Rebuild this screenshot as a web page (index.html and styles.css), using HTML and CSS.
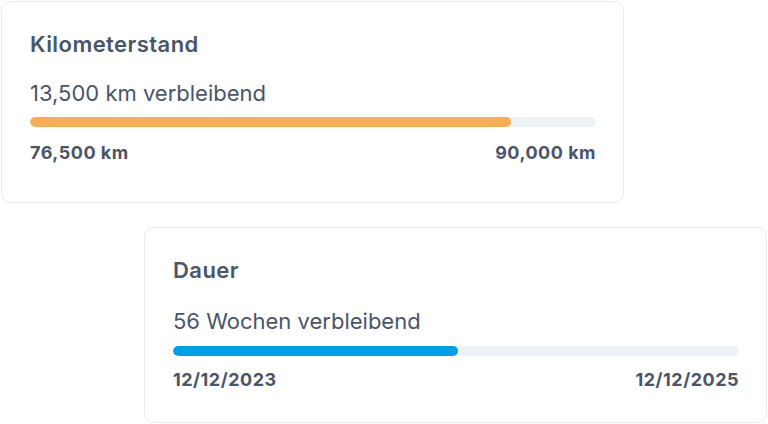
FILE: index.html
```html
<!DOCTYPE html>
<html lang="de">
<head>
<meta charset="utf-8">
<link rel="stylesheet" href="styles.css">
</head>
<body>
<div class="stack">
  <section class="card card-km">
    <h2 class="title">Kilometerstand</h2>
    <p class="remaining">13,500 km verbleibend</p>
    <div class="track"><div class="fill fill-orange" style="width:85%"></div></div>
    <div class="labels"><span>76,500 km</span><span>90,000 km</span></div>
  </section>
  <section class="card card-time">
    <h2 class="title">Dauer</h2>
    <p class="remaining">56 Wochen verbleibend</p>
    <div class="track"><div class="fill fill-blue" style="width:50.4%"></div></div>
    <div class="labels"><span>12/12/2023</span><span>12/12/2025</span></div>
  </section>
</div>
</body>
</html>
```
FILE: styles.css
```css
* { box-sizing: border-box; }
html, body { margin: 0; padding: 0; background: #fff; }
body {
  font-family: "Inter", "Open Sans", sans-serif;
  color: #4a5568;
  width: 768px;
  height: 424px;
  overflow: hidden;
}
.stack {
  display: flex;
  flex-direction: column;
  padding: 1px 0 0 1px;
}
.card {
  width: 623px;
  background: #fff;
  border: 1px solid #e8eaee;
  border-radius: 10px;
  padding: 28px 27px 0 28px;
}
.card-km { height: 202px; }
.card-time { height: 196px; margin-left: 143px; margin-top: 24px; }
.title {
  margin: 0;
  font-size: 22px;
  line-height: 28px;
  font-weight: 600;
  letter-spacing: 0.45px;
  color: #4a5568;
}
.remaining {
  margin: 21px 0 0;
  font-size: 22px;
  line-height: 28px;
  font-weight: 400;
  color: #4a5568;
}
.card-time .remaining { margin-top: 23px; }
.track {
  margin-top: 10px;
  height: 10px;
  border-radius: 5px;
  background: #edf2f7;
  overflow: hidden;
}
.card-time .track { margin-top: 11px; }
.fill { height: 100%; border-radius: 5px; }
.fill-orange { background: #f6ad55; }
.fill-blue { background: #009fe3; }
.labels {
  margin-top: 15px;
  display: flex;
  justify-content: space-between;
  font-size: 18px;
  line-height: 22px;
  font-weight: 700;
  letter-spacing: 0.5px;
  color: #4a5568;
}
.card-time .labels { margin-top: 13px; }
```
